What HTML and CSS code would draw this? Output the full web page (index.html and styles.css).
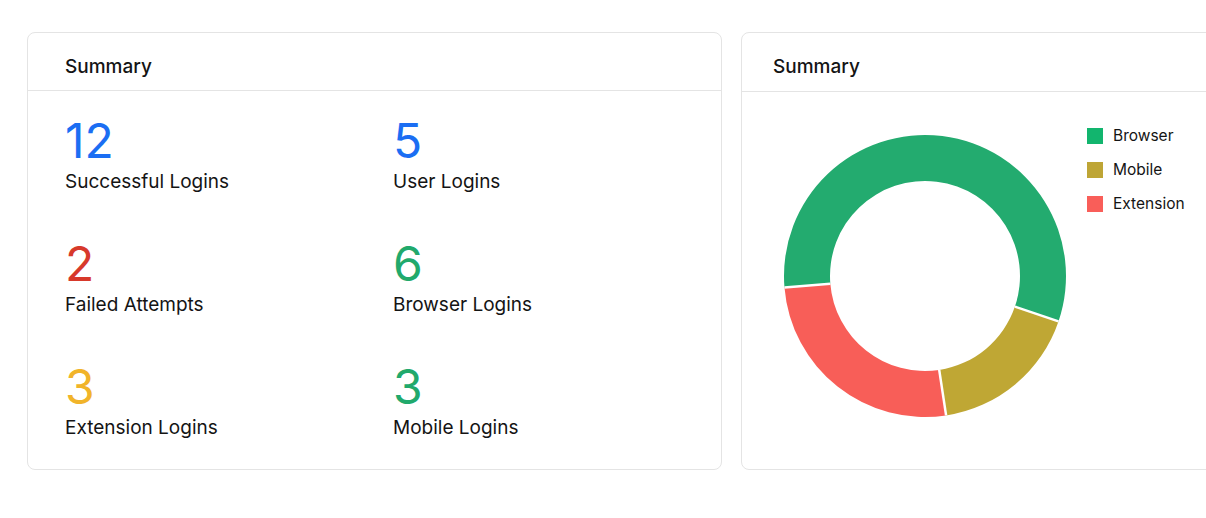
FILE: index.html
```html
<!DOCTYPE html>
<html lang="en">
<head>
  <meta charset="UTF-8" />
  <meta name="viewport" content="width=device-width, initial-scale=1.0" />
  <title>Login Summary</title>
  <link rel="stylesheet" href="styles.css">
</head>
<body>
  <div class="cards">
    <section class="card">
      <header class="card-head">Summary</header>
      <div class="stats">
        <div class="stat">
          <div class="num blue">12</div>
          <div class="label">Successful Logins</div>
        </div>
        <div class="stat">
          <div class="num blue">5</div>
          <div class="label">User Logins</div>
        </div>
        <div class="stat">
          <div class="num red">2</div>
          <div class="label">Failed Attempts</div>
        </div>
        <div class="stat">
          <div class="num green">6</div>
          <div class="label">Browser Logins</div>
        </div>
        <div class="stat">
          <div class="num yellow">3</div>
          <div class="label">Extension Logins</div>
        </div>
        <div class="stat">
          <div class="num green">3</div>
          <div class="label">Mobile Logins</div>
        </div>
      </div>
    </section>

    <section class="card chart-card">
      <header class="card-head">Summary</header>
      <div class="chart-body">
        <svg class="donut" width="290" height="290" viewBox="0 0 290 290">
          <!-- browser -->
          <path d="M4.47 156.55 A141 141 0 1 1 278.48 190.44 L234.93 175.62 A95 95 0 1 0 50.32 152.78 Z" fill="#23ab6f" />
          <!-- mobile -->
          <path d="M278.48 190.44 A141 141 0 0 1 166.09 284.42 L159.21 238.93 A95 95 0 0 0 234.93 175.62 Z" fill="#bfa734" />
          <!-- extension -->
          <path d="M166.09 284.42 A141 141 0 0 1 4.47 156.55 L50.32 152.78 A95 95 0 0 0 159.21 238.93 Z" fill="#f85e58" />
          <g stroke="#fff" stroke-width="2.5">
            <line x1="4.47" y1="156.55" x2="50.32" y2="152.78" />
            <line x1="278.48" y1="190.44" x2="234.93" y2="175.62" />
            <line x1="166.09" y1="284.42" x2="159.21" y2="238.93" />
          </g>
        </svg>
        <ul class="legend">
          <li><span class="swatch sw-browser"></span>Browser</li>
          <li><span class="swatch sw-mobile"></span>Mobile</li>
          <li><span class="swatch sw-extension"></span>Extension</li>
        </ul>
      </div>
    </section>
  </div>
</body>
</html>
```

FILE: styles.css
```css
:root {
  --text: #141414;
  --border: #e4e4e4;
  --blue: #1b6ef3;
  --red: #d7392b;
  --yellow: #f1b42a;
  --green: #21a96c;
}

html, body {
  margin: 0;
  background: #fff;
  overflow: hidden;
}

body {
  font-family: 'Inter', 'Noto Sans', sans-serif;
  color: var(--text);
}

.cards {
  display: flex;
  gap: 19px;
  padding: 32px 0 0 27px;
  width: 1450px;
}

.card {
  width: 695px;
  flex-shrink: 0;
  border: 1px solid var(--border);
  border-radius: 8px;
  box-sizing: border-box;
  height: 438px;
}

.card-head {
  padding: 22px 37px 11px;
  font-size: 19px;
  line-height: 24px;
  font-weight: 500;
  border-bottom: 1.5px solid var(--border);
}

.chart-card .card-head {
  padding-left: 31px;
  padding-bottom: 12px;
}

.stats {
  display: grid;
  grid-template-columns: 328px 1fr;
  row-gap: 46px;
  padding: 26px 37px 0;
}

.num {
  font-size: 48px;
  line-height: 48px;
  font-weight: 400;
}

.label {
  margin-top: 5px;
  font-size: 19px;
  line-height: 24px;
}

.blue { color: var(--blue); }
.red { color: var(--red); }
.yellow { color: var(--yellow); }
.green { color: var(--green); }

.chart-body {
  display: flex;
  align-items: flex-start;
  padding: 34px 0 0 38px;
}

.donut {
  margin-top: 5px;
  display: block;
}

.legend {
  list-style: none;
  margin: 0 0 0 17px;
  padding: 0;
  display: flex;
  flex-direction: column;
  gap: 14px;
}

.legend li {
  display: flex;
  align-items: center;
  gap: 10px;
  font-size: 15.5px;
  line-height: 20px;
}

.swatch {
  width: 16px;
  height: 16px;
  display: inline-block;
}

.sw-browser { background: #12b56e; }
.sw-mobile { background: #bea535; }
.sw-extension { background: #f95e59; }
```
